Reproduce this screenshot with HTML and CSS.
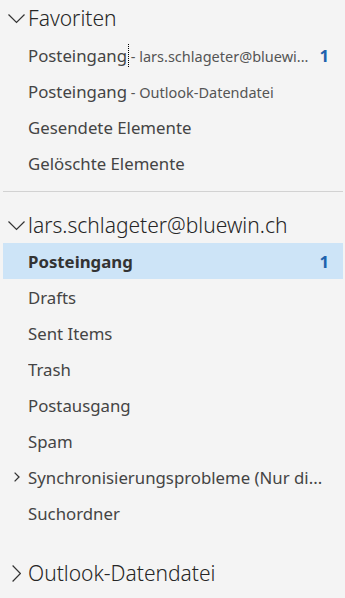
FILE: index.html
```html
<!DOCTYPE html>
<html>
<head>
<meta charset="utf-8">
<link rel="stylesheet" href="styles.css">
</head>
<body>
<nav class="pane">
  <section class="group">
    <div class="group-head">
      <svg class="chev-down" width="17" height="10" viewBox="0 0 17 10"><path d="M0.5 0.5 L8.5 8.5 L16.5 0.5" fill="none" stroke="#333" stroke-width="1.2"/></svg>
      <span class="head-text">Favoriten</span>
    </div>
    <div class="row">
      <span class="label"><span class="focus">Posteingang</span><span class="sub"> - lars.schlageter@bluewi...</span></span>
      <span class="count">1</span>
    </div>
    <div class="row">
      <span class="label">Posteingang<span class="sub"> - Outlook-Datendatei</span></span>
    </div>
    <div class="row"><span class="label">Gesendete Elemente</span></div>
    <div class="row"><span class="label">Gelöschte Elemente</span></div>
  </section>

  <hr class="divider">

  <section class="group account">
    <div class="group-head">
      <svg class="chev-down" width="17" height="10" viewBox="0 0 17 10"><path d="M0.5 0.5 L8.5 8.5 L16.5 0.5" fill="none" stroke="#333" stroke-width="1.2"/></svg>
      <span class="head-text">lars.schlageter@bluewin.ch</span>
    </div>
    <div class="row selected">
      <span class="label bold">Posteingang</span>
      <span class="count">1</span>
    </div>
    <div class="row"><span class="label">Drafts</span></div>
    <div class="row"><span class="label">Sent Items</span></div>
    <div class="row"><span class="label">Trash</span></div>
    <div class="row"><span class="label">Postausgang</span></div>
    <div class="row"><span class="label">Spam</span></div>
    <div class="row">
      <svg class="chev-right-sm" width="6" height="10" viewBox="0 0 6 10"><path d="M0.6 0.6 L5 5 L0.6 9.4" fill="none" stroke="#333" stroke-width="1.3"/></svg>
      <span class="label">Synchronisierungsprobleme (Nur di...</span>
    </div>
    <div class="row"><span class="label">Suchordner</span></div>
  </section>

  <section class="group data">
    <div class="group-head">
      <svg class="chev-right" width="9" height="17" viewBox="0 0 9 17"><path d="M0.6 0.5 L8.4 8.5 L0.6 16.5" fill="none" stroke="#333" stroke-width="1.2"/></svg>
      <span class="head-text">Outlook-Datendatei</span>
    </div>
  </section>
</nav>
</body>
</html>
```

FILE: styles.css
```css
html, body {
  margin: 0;
  padding: 0;
  background: #f4f4f4;
}

.pane {
  width: 345px;
  height: 598px;
  overflow: hidden;
  font-family: "Segoe UI", "Noto Sans", "Open Sans", sans-serif;
  color: #444;
}

.group-head {
  height: 36px;
  display: flex;
  align-items: center;
  position: relative;
  padding-left: 28px;
  color: #262626;
}

.head-text {
  font-size: 21px;
  font-weight: 300;
  white-space: nowrap;
}

.chev-down {
  position: absolute;
  left: 8px;
  top: 14px;
}

.chev-right {
  position: absolute;
  left: 12px;
  top: 10px;
}

.chev-right-sm {
  position: absolute;
  left: 11px;
  top: 13px;
}

.group:first-child .group-head {
  height: 35px;
  margin-bottom: 2px;
}

.row {
  position: relative;
  height: 36px;
  display: flex;
  align-items: center;
  margin: 0 2px 0 3px;
  padding: 0 14px 0 25px;
  font-size: 16.8px;
}

.label {
  flex: 1;
  min-width: 0;
  white-space: nowrap;
  overflow: hidden;
  text-overflow: ellipsis;
}

.sub {
  font-size: 14.5px;
  color: #555;
}

.focus {
  outline: 1px dotted #000;
  outline-offset: 1px;
}

.count {
  color: #1f62ae;
  font-weight: 700;
  font-size: 16.8px;
  margin-left: 8px;
}

.selected {
  background: #cde4f7;
}

.bold {
  font-weight: 700;
  color: #333;
}

.divider {
  border: 0;
  border-top: 1px solid #d2d2d2;
  margin: 10px 2px 15px 3px;
}

.data {
  margin-top: 24px;
}
```
